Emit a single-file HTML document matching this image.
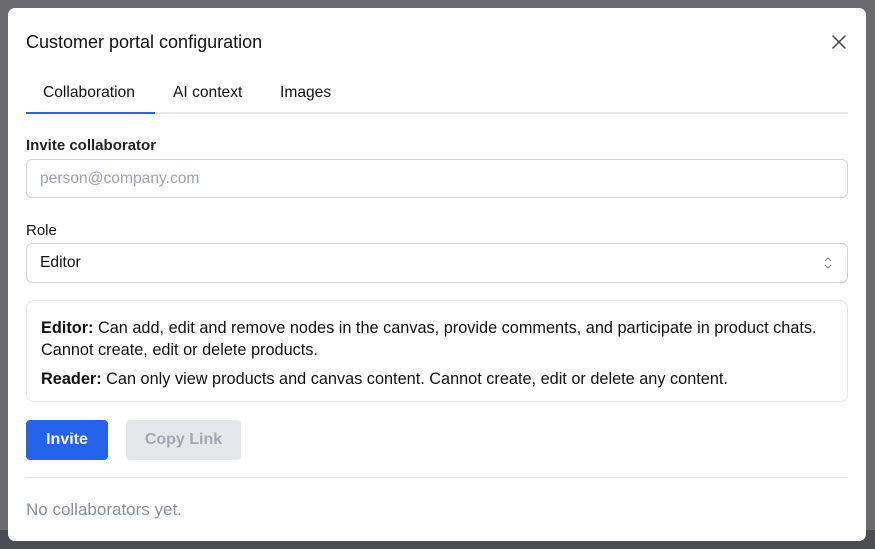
<!DOCTYPE html>
<html><head><meta charset="utf-8"><style>
*{box-sizing:border-box;margin:0;padding:0}
body{width:875px;height:549px;overflow:hidden;background:#6b6b6d;font-family:"Liberation Sans",Helvetica,Arial,sans-serif;position:relative;color:#111}
.bgb{position:absolute;left:0;top:530px;width:875px;height:19px;background:#4c4d52}
.modal{position:absolute;left:8px;top:8px;width:858px;height:533px;background:#fff;border-radius:7px}
.a{position:absolute;white-space:nowrap}
.title{left:18px;top:24px;font-size:18px;color:#111}
.close{left:822px;top:25px}
.tab{top:76px;font-size:15.6px;color:#111}
.tabline{left:18px;top:104px;width:822px;height:2px;background:#e5e7eb}
.tabsel{left:18px;top:104px;width:129px;height:2px;background:#2563eb}
.lbl{font-size:15px;font-weight:bold;color:#222;left:18px}
.input{left:18px;width:822px;border:1px solid #d1d5db;border-radius:6px;font-size:15.6px;padding-left:13px;display:flex;align-items:center}
.info{left:18px;top:292px;width:822px;height:102px;border:1px solid #e5e7eb;border-radius:8px;padding:16px 14px;font-size:16.3px;line-height:22px;color:#111}
.info b{color:#111}
.btn{top:412px;height:40px;border-radius:4px;font-size:16px;font-weight:bold;display:flex;align-items:center;justify-content:center}
</style></head><body>
<div class="bgb"></div>
<div class="modal">
<div class="a title">Customer portal configuration</div>
<svg class="a close" width="18" height="18" viewBox="0 0 18 18"><path d="M3 3L15 15M15 3L3 15" stroke="#444" stroke-width="1.5" stroke-linecap="round"/></svg>
<div class="a tab" style="left:35px">Collaboration</div>
<div class="a tab" style="left:165px">AI context</div>
<div class="a tab" style="left:272px">Images</div>
<div class="a tabline"></div><div class="a tabsel"></div>
<div class="a lbl" style="top:129px">Invite collaborator</div>
<div class="a input" style="top:151px;height:39px;color:#9ca3af">person@company.com</div>
<div class="a lbl" style="top:214px;font-weight:normal;color:#111">Role</div>
<div class="a input" style="top:235px;height:40px;color:#111">Editor</div>
<svg class="a" style="left:814px;top:247px" width="12" height="16" viewBox="0 0 12 16"><path d="M3 6L6 3L9 6M3 10L6 13L9 10" fill="none" stroke="#888" stroke-width="1.2"/></svg>
<div class="a info"><b>Editor:</b> Can add, edit and remove nodes in the canvas, provide comments, and participate in product chats.<br>Cannot create, edit or delete products.<div style="margin-top:7px"><b>Reader:</b> Can only view products and canvas content. Cannot create, edit or delete any content.</div></div>
<div class="a btn" style="left:18px;width:82px;background:#2563eb;color:#fff">Invite</div>
<div class="a btn" style="left:118px;width:115px;background:#e5e7eb;color:#a3a8b0">Copy Link</div>
<div class="a" style="left:18px;top:469px;width:822px;height:1px;background:#e5e7eb"></div>
<div class="a" style="left:18px;top:492px;font-size:17px;color:#8b9099">No collaborators yet.</div>
</div>
</body></html>
